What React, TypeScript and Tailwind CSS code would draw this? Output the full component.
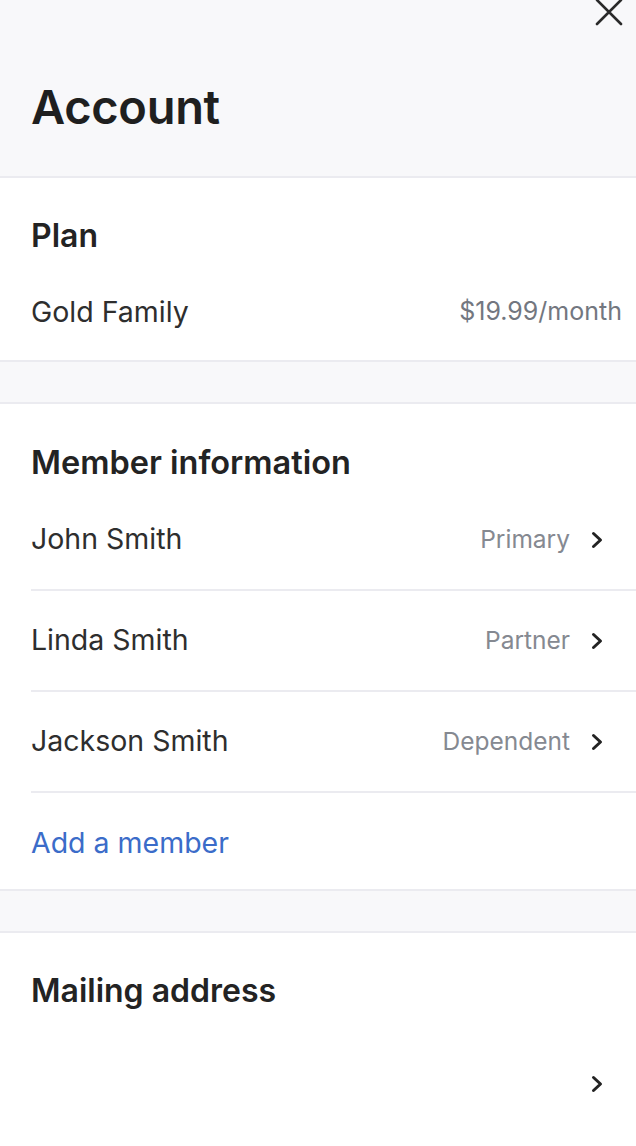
import React from 'react'

const members = [
  { name: 'John Smith', role: 'Primary' },
  { name: 'Linda Smith', role: 'Partner' },
  { name: 'Jackson Smith', role: 'Dependent' },
]

function Chevron() {
  return (
    <svg width="14" height="18" viewBox="0 0 14 18" fill="none" className="shrink-0">
      <path d="M3.5 2.5 L10.5 9 L3.5 15.5" stroke="#232323" strokeWidth="3" strokeLinecap="round" strokeLinejoin="round" />
    </svg>
  )
}

function Band() {
  return <div className="h-[42px] bg-[#f8f8fa] border-b-2 border-[#ebebf0]" />
}

export default function App() {
  return (
    <div
      className="w-[636px] h-[1146px] overflow-hidden bg-white text-[#2e2e2e]"
      style={{ fontFamily: 'Inter, "Noto Sans", sans-serif' }}
    >
      {/* Header */}
      <div className="h-[178px] bg-[#f8f8fa] border-b-2 border-[#ebebf0] flex flex-col">
        <div className="flex justify-end pr-[12px] -mt-[3px]">
          <svg width="30" height="30" viewBox="0 0 30 30" fill="none">
            <path d="M3 3 L27 27 M27 3 L3 27" stroke="#2a2a2a" strokeWidth="2.6" strokeLinecap="round" />
          </svg>
        </div>
        <h1 className="mt-[54px] pl-[31px] text-[47px] leading-[52px] font-semibold text-[#1f1f1f] tracking-[-0.3px]">
          Account
        </h1>
      </div>

      {/* Plan */}
      <div className="pt-[40px] pb-[30px] border-b-2 border-[#ebebf0]">
        <h2 className="pl-[31px] text-[32px] leading-[36px] font-semibold text-[#232323]">Plan</h2>
        <div className="mt-[40px] pl-[31px] pr-[14px] flex items-center justify-between h-[36px]">
          <span className="text-[28.5px]">Gold Family</span>
          <span className="text-[25px] text-[#737780]">$19.99/month</span>
        </div>
      </div>

      <Band />

      {/* Member information */}
      <div className="pt-[41px] border-b-2 border-[#ebebf0]">
        <h2 className="pl-[31px] text-[32.5px] leading-[36px] font-semibold text-[#232323]">Member information</h2>
        <div className="mt-[9px] ml-[31px]">
          {members.map((m) => (
            <div key={m.name} className="h-[101px] border-b-2 border-[#ebebf0] flex items-center justify-between pr-[32px]">
              <span className="text-[28.5px]">{m.name}</span>
              <div className="flex items-center gap-[20px]">
                <span className="text-[24.5px] text-[#858991]">{m.role}</span>
                <Chevron />
              </div>
            </div>
          ))}
          <div className="h-[96px] pt-[4px] flex items-center">
            <span className="text-[28.5px] text-[#3b6cc9]">Add a member</span>
          </div>
        </div>
      </div>

      <Band />

      {/* Mailing address */}
      <div className="pt-[40px]">
        <h2 className="pl-[31px] text-[32px] leading-[36px] font-semibold text-[#232323]">Mailing address</h2>
        <div className="mt-[25px] h-[100px] pl-[31px] pr-[32px] flex items-center justify-end">
          <Chevron />
        </div>
      </div>
    </div>
  )
}
